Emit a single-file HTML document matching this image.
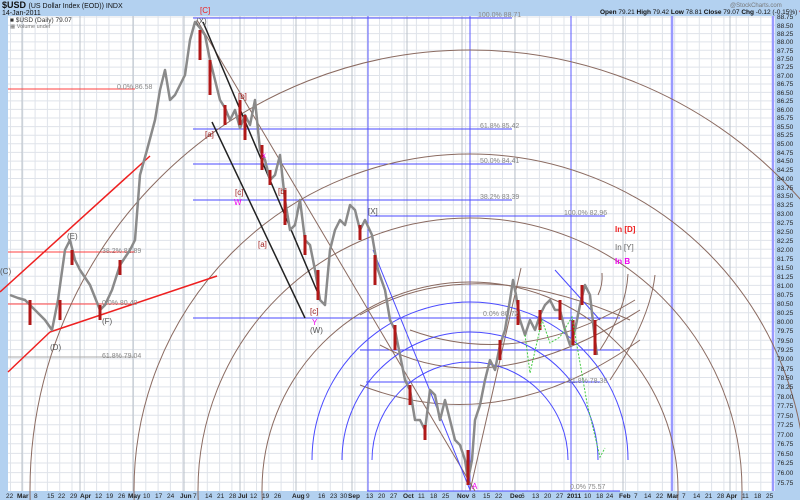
<!DOCTYPE html>
<html><head><meta charset="utf-8"><style>
html,body{margin:0;width:800px;height:500px;overflow:hidden;background:#b3d1f0;font-family:"Liberation Sans",sans-serif}
svg{position:absolute;left:0;top:0;display:block}
</style></head><body>
<svg width="800" height="500" viewBox="0 0 800 500" xmlns="http://www.w3.org/2000/svg" font-family="Liberation Sans, sans-serif">
<defs>
<pattern id="vg" x="10" y="0" width="12.3" height="500" patternUnits="userSpaceOnUse"><line x1="0.5" y1="0" x2="0.5" y2="500" stroke="#dfe3ea" stroke-width="1"/></pattern>
</defs>
<rect x="0" y="0" width="800" height="500" fill="#b3d1f0"/>
<rect x="8" y="16" width="767" height="475" fill="#fff"/>
<rect x="8" y="16" width="767" height="475" fill="url(#vg)"/>
<path stroke="#dfe3ea" stroke-width="1" fill="none" d="M8,17H775M8,25.3H775M8,33.6H775M8,41.9H775M8,50.3H775M8,58.7H775M8,67.1H775M8,75.5H775M8,84H775M8,92.4H775M8,100.9H775M8,109.4H775M8,118H775M8,126.6H775M8,135.2H775M8,143.8H775M8,152.4H775M8,161.1H775M8,169.8H775M8,178.5H775M8,187.3H775M8,196.1H775M8,204.9H775M8,213.7H775M8,222.6H775M8,231.5H775M8,240.4H775M8,249.3H775M8,258.3H775M8,267.3H775M8,276.3H775M8,285.4H775M8,294.5H775M8,303.6H775M8,312.7H775M8,321.9H775M8,331.1H775M8,340.3H775M8,349.6H775M8,358.8H775M8,368.2H775M8,377.5H775M8,386.9H775M8,396.3H775M8,405.7H775M8,415.2H775M8,424.7H775M8,434.2H775M8,443.8H775M8,453.4H775M8,463H775M8,472.6H775M8,482.3H775"/>
<path stroke="#b9c0c8" stroke-width="1" fill="none" d="M22,16V491M80,16V491M133,16V491M184,16V491M240,16V491M296,16V491M352,16V491M407,16V491M462,16V491M515,16V491M571,16V491M623,16V491M672,16V491M730,16V491"/>
<path stroke="#5b5bff" stroke-width="1" fill="none" d="M368,16V491M470,16V491M571,16V491"/>
<path stroke="#9a9aff" stroke-width="2.5" fill="none" d="M672,16V491M773,16V491"/>
<path stroke="#4a4aff" stroke-width="1" fill="none" d="M193,18H512M193,129H512M193,164H512M193,200H512M370,216H605M193,318H620M360,350H620M366,382H600M367,491H620"/>
<path stroke="#ff4040" stroke-width="1" fill="none" d="M8,89H135M8,252H135M8,304H135"/>
<path stroke="#aaa" stroke-width="1" fill="none" d="M8,357H135"/>
<g fill="none" stroke="#8a6a60" stroke-width="1">
<circle cx="470" cy="490" r="208"/><circle cx="470" cy="490" r="272"/><circle cx="470" cy="490" r="336"/><circle cx="470" cy="490" r="440"/>
<path d="M360,315 Q470,250 630,320"/>
<path d="M360,385 Q500,440 640,340"/>
<path d="M380,345 Q490,405 640,310"/>
<path d="M410,330 Q520,370 635,300"/>
<path d="M197,20 L475,491"/>
<path d="M470,491 L521,268"/>
<path d="M602,273 Q603,285 598,295"/>
<path d="M628,274 Q626,310 600,350"/>
<path d="M655,275 Q650,320 610,380"/>
</g>
<g fill="none" stroke="#4a4aff" stroke-width="1">
<path d="M372,460 A98,98 0 0 1 568,460"/>
<path d="M342,460 A128,128 0 0 1 598,460"/>
<path d="M312,460 A158,158 0 0 1 628,460"/>
<path d="M373,250 L470,490"/>
<path d="M555,270 L600,320"/>
</g>
<g stroke="#ee2020" stroke-width="1.5" fill="none">
<path d="M0,292 L150,156"/><path d="M50,332 L217,276"/><path d="M8,372 L50,332"/>
</g>
<g stroke="#222" stroke-width="1.5" fill="none">
<path d="M203,22 L320,298"/><path d="M212,122 L305,318"/>
</g>
<polyline fill="none" stroke="#8a8a8a" stroke-width="2.5" stroke-linejoin="round" points="10,295 18,298 25,300 35,310 45,320 52,330 58,300 65,250 70,240 75,260 80,270 90,285 100,310 105,305 112,290 120,265 130,250 135,240 140,175 147,150 155,120 160,90 165,70 170,100 175,95 180,85 185,75 190,40 195,22 200,28 205,35 210,60 215,80 220,100 225,108 230,120 235,110 240,128 245,115 250,125 255,100 260,150 265,160 270,180 275,175 280,155 285,200 290,230 295,225 300,200 305,240 310,245 315,270 320,300 325,305 330,250 335,230 340,220 345,225 350,205 355,210 360,230 365,220 372,235 378,270 385,290 390,320 395,330 400,355 405,380 410,390 415,420 420,420 425,430 430,390 435,395 440,420 445,400 450,420 455,440 460,445 465,460 468,480 472,460 475,420 480,405 485,380 490,360 495,370 500,345 505,330 510,300 513,280 516,295 520,320 525,335 530,320 535,330 540,315 545,305 550,300 555,310 560,310 565,330 570,345 575,330 580,305 585,285 590,295 595,340 597,355"/>
<g stroke="#b01818" stroke-width="3" fill="none">
<path d="M200,30V60M210,60V95M225,105V125M245,115V140M262,145V170M285,190V225M305,235V255M318,270V300M375,255V285M395,325V350M410,385V405M425,425V440M468,450V485M500,340V360M518,300V325M540,310V330M582,285V305M595,320V355M573,320V345M560,300V320M360,225V240M240,100V125M270,170V185M120,260V275M72,250V265M60,300V320M30,300V325M100,305V320"/>
</g>
<g stroke="#44cc44" stroke-width="1" stroke-dasharray="2,1.5" fill="none">
<path d="M525,335 L530,373 L542,320 L550,343 L560,337 L572,317 L587,403 L600,457 L605,448"/>
</g>
<g font-size="7" fill="#888">
<text x="117" y="89">0.0% 86.58</text>
<text x="478" y="17">100.0% 88.71</text>
<text x="480" y="128">61.8% 85.42</text>
<text x="480" y="163">50.0% 84.41</text>
<text x="480" y="199">38.2% 83.39</text>
<text x="564" y="215">100.0% 82.96</text>
<text x="102" y="253">38.2% 81.89</text>
<text x="102" y="305">0.0% 80.40</text>
<text x="102" y="358">61.8% 79.04</text>
<text x="483" y="316">0.0% 80.72</text>
<text x="568" y="383">61.8% 78.38</text>
<text x="570" y="489">0.0% 75.57</text>
</g>
<g font-size="8" fill="#555">
<text x="67" y="239">(E)</text><text x="102" y="324">(F)</text><text x="50" y="350">(D)</text>
<text x="310" y="333">(W)</text><text x="368" y="214">[X]</text><text x="196" y="24">(X)</text><text x="0" y="274">(C)</text>
</g>
<g font-size="8" fill="#a02020">
<text x="205" y="137">[a]</text><text x="238" y="99">[b]</text><text x="235" y="195">[c]</text><text x="258" y="247">[a]</text><text x="278" y="194">[b]</text><text x="310" y="314">[c]</text>
</g>
<g font-size="8" fill="#ee00ee"><text x="262" y="158">x</text><text x="234" y="205">W</text><text x="312" y="325">Y</text><text x="472" y="489">A</text></g>
<text x="200" y="13" font-size="8" fill="#ee2020">[C]</text>
<text x="615" y="232" font-size="8" font-weight="bold" fill="#ee2020">In [D]</text>
<text x="615" y="250" font-size="8" fill="#666">In [Y]</text>
<text x="615" y="264" font-size="8" font-weight="bold" fill="#ee00ee">In B</text>
<text x="2" y="8" font-size="9" font-weight="bold" fill="#111">$USD <tspan font-weight="normal" font-size="7">(US Dollar Index (EOD)) INDX</tspan></text>
<text x="2" y="15" font-size="7" fill="#111">14-Jan-2011</text>
<text x="10" y="22" font-size="6.5" fill="#333">■ $USD (Daily) 79.07</text>
<text x="10" y="28" font-size="5.5" fill="#777">▦ Volume undef</text>
<text x="730" y="7" font-size="6" fill="#777">@StockCharts.com</text>
<text x="600" y="14" font-size="6.5" fill="#111"><tspan font-weight="bold">Open</tspan> 79.21 <tspan font-weight="bold">High</tspan> 79.42 <tspan font-weight="bold">Low</tspan> 78.81 <tspan font-weight="bold">Close</tspan> 79.07 <tspan font-weight="bold">Chg</tspan> -0.12 (-0.15%) <tspan fill="#c00">▾</tspan></text>
<g font-size="6.5" fill="#222">
<text x="777" y="19">88.75</text><text x="777" y="28">88.50</text><text x="777" y="36">88.25</text><text x="777" y="44">88.00</text><text x="777" y="53">87.75</text><text x="777" y="61">87.50</text><text x="777" y="69">87.25</text><text x="777" y="78">87.00</text><text x="777" y="86">86.75</text><text x="777" y="95">86.50</text><text x="777" y="103">86.25</text><text x="777" y="112">86.00</text><text x="777" y="120">85.75</text><text x="777" y="129">85.50</text><text x="777" y="137">85.25</text><text x="777" y="146">85.00</text><text x="777" y="155">84.75</text><text x="777" y="163">84.50</text><text x="777" y="172">84.25</text><text x="777" y="181">84.00</text><text x="777" y="190">83.75</text><text x="777" y="198">83.50</text><text x="777" y="207">83.25</text><text x="777" y="216">83.00</text><text x="777" y="225">82.75</text><text x="777" y="234">82.50</text><text x="777" y="243">82.25</text><text x="777" y="252">82.00</text><text x="777" y="261">81.75</text><text x="777" y="270">81.50</text><text x="777" y="279">81.25</text><text x="777" y="288">81.00</text><text x="777" y="297">80.75</text><text x="777" y="306">80.50</text><text x="777" y="315">80.25</text><text x="777" y="324">80.00</text><text x="777" y="333">79.75</text><text x="777" y="343">79.50</text><text x="777" y="352">79.25</text><text x="777" y="361">79.00</text><text x="777" y="371">78.75</text><text x="777" y="380">78.50</text><text x="777" y="389">78.25</text><text x="777" y="399">78.00</text><text x="777" y="408">77.75</text><text x="777" y="418">77.50</text><text x="777" y="427">77.25</text><text x="777" y="437">77.00</text><text x="777" y="446">76.75</text><text x="777" y="456">76.50</text><text x="777" y="465">76.25</text><text x="777" y="475">76.00</text><text x="777" y="485">75.75</text>
</g>
<g font-size="6.5" fill="#222">
<text x="6" y="498">22</text><text x="17" y="498" font-weight="bold">Mar</text><text x="34" y="498">8</text><text x="47" y="498">15</text><text x="58" y="498">22</text><text x="70" y="498">29</text><text x="80" y="498" font-weight="bold">Apr</text><text x="95" y="498">12</text><text x="106" y="498">19</text><text x="118" y="498">26</text><text x="128" y="498" font-weight="bold">May</text><text x="143" y="498">10</text><text x="155" y="498">17</text><text x="167" y="498">24</text><text x="180" y="498" font-weight="bold">Jun</text><text x="193" y="498">7</text><text x="205" y="498">14</text><text x="217" y="498">21</text><text x="229" y="498">28</text><text x="238" y="498" font-weight="bold">Jul</text><text x="250" y="498">12</text><text x="262" y="498">19</text><text x="274" y="498">26</text><text x="292" y="498" font-weight="bold">Aug</text><text x="306" y="498">9</text><text x="318" y="498">16</text><text x="330" y="498">23</text><text x="340" y="498">30</text><text x="348" y="498" font-weight="bold">Sep</text><text x="366" y="498">13</text><text x="378" y="498">20</text><text x="390" y="498">27</text><text x="403" y="498" font-weight="bold">Oct</text><text x="418" y="498">11</text><text x="430" y="498">18</text><text x="442" y="498">25</text><text x="457" y="498" font-weight="bold">Nov</text><text x="472" y="498">8</text><text x="483" y="498">15</text><text x="495" y="498">22</text><text x="510" y="498" font-weight="bold">Dec</text><text x="521" y="498">6</text><text x="532" y="498">13</text><text x="544" y="498">20</text><text x="556" y="498">27</text><text x="567" y="498" font-weight="bold">2011</text><text x="584" y="498">10</text><text x="596" y="498">18</text><text x="606" y="498">24</text><text x="619" y="498" font-weight="bold">Feb</text><text x="634" y="498">7</text><text x="644" y="498">14</text><text x="656" y="498">22</text><text x="667" y="498" font-weight="bold">Mar</text><text x="682" y="498">7</text><text x="693" y="498">14</text><text x="705" y="498">21</text><text x="717" y="498">28</text><text x="726" y="498" font-weight="bold">Apr</text><text x="742" y="498">11</text><text x="754" y="498">18</text><text x="766" y="498">25</text>
</g>
</svg>
</body></html>
